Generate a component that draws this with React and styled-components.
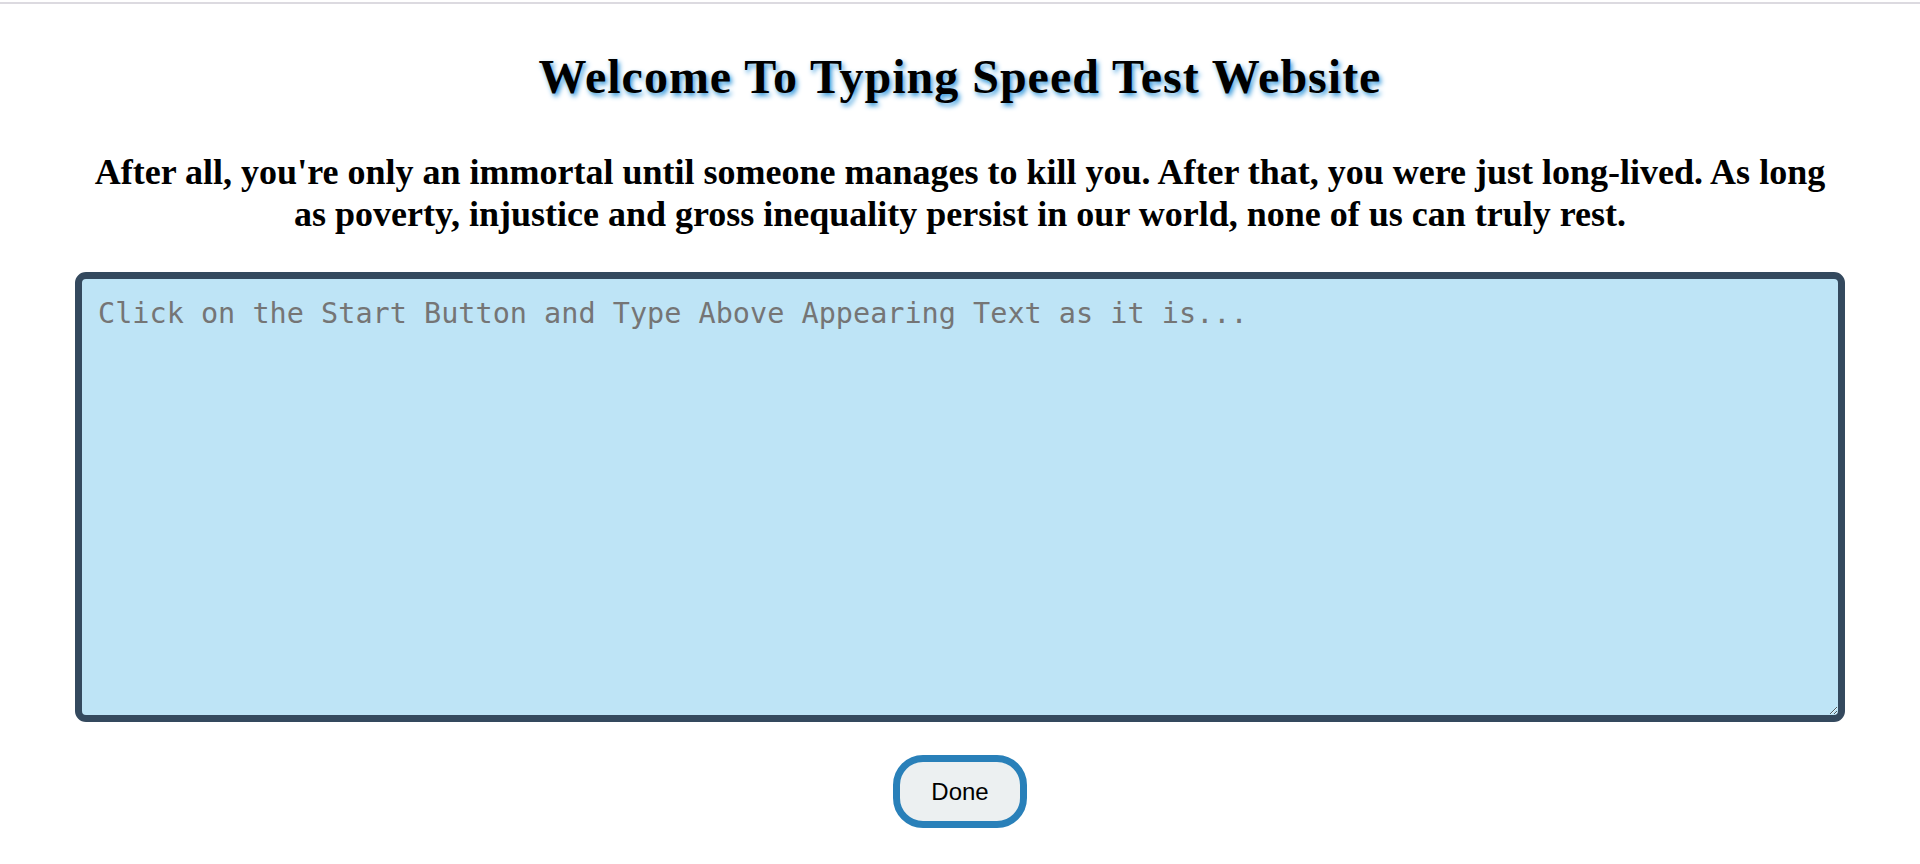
import React from "react";
import styled, { createGlobalStyle } from "styled-components";

const GlobalStyle = createGlobalStyle`
  html, body { margin: 0; padding: 0; background: #ffffff; }
  body { font-family: "Liberation Serif", "Times New Roman", serif; }
`;

const Page = styled.div`
  display: flex;
  flex-direction: column;
  align-items: center;
  width: 100%;
`;

const TopRule = styled.div`
  width: 100%;
  height: 2px;
  margin-top: 2px;
  background: #dcdae0;
`;

const Title = styled.h1`
  margin: 45px 0 0;
  font-family: "Liberation Serif", "Times New Roman", serif;
  font-size: 48px;
  font-weight: bold;
  letter-spacing: 1px;
  line-height: 55px;
  color: #000;
  text-align: center;
  text-shadow: 2px 3px 5px #3498db;
`;

const Quote = styled.h2`
  margin: 47px 80px 0;
  font-family: "Liberation Serif", "Times New Roman", serif;
  font-size: 36px;
  font-weight: bold;
  line-height: 42px;
  color: #000;
  text-align: center;
`;

const TypingArea = styled.textarea`
  box-sizing: border-box;
  width: calc(100% - 150px);
  height: 450px;
  margin-top: 37px;
  padding: 16px 16px 15px;
  border: 7px solid #34495e;
  border-radius: 11px;
  background: #bee4f6;
  font-family: "DejaVu Sans Mono", monospace;
  font-size: 28.5px;
  line-height: 37px;
  color: #000;
  outline: none;
  &::placeholder {
    color: #757575;
  }
`;

const DoneButton = styled.button`
  box-sizing: border-box;
  margin-top: 33px;
  padding: 16px 31px;
  border: 7px solid #2980b9;
  border-radius: 30px;
  background: #ecf0f1;
  font-family: "Liberation Sans", Arial, sans-serif;
  font-size: 24px;
  line-height: 27px;
  color: #000;
  cursor: pointer;
`;

export default function App() {
  return (
    <>
      <GlobalStyle />
      <Page>
        <TopRule />
        <Title>Welcome To Typing Speed Test Website</Title>
        <Quote>
          After all, you're only an immortal until someone manages to kill you. After that, you were just long-lived. As long as poverty, injustice and gross inequality persist in our world, none of us can truly rest.
        </Quote>
        <TypingArea
          autoFocus
          placeholder="Click on the Start Button and Type Above Appearing Text as it is..."
        />
        <DoneButton>Done</DoneButton>
      </Page>
    </>
  );
}
